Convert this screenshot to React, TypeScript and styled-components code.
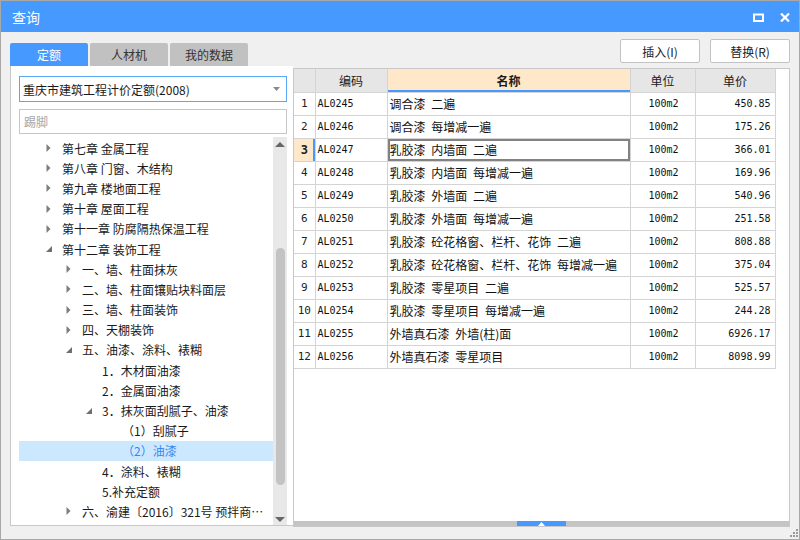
import React from 'react';
import styled, { createGlobalStyle, css } from 'styled-components';

const GlobalStyle = createGlobalStyle`
  html, body { margin: 0; padding: 0; }
  body {
    width: 800px;
    height: 540px;
    overflow: hidden;
    font-family: "Noto Sans CJK SC", "Liberation Sans", sans-serif;
    color: #1a1a1a;
  }
  * { box-sizing: border-box; }
`;

const colors = {
  blue: '#4599ff',
  border: '#c8c8c8',
  grid: '#d4d4d4',
  peach: '#ffe8c9',
  selected: '#cce8ff',
  body: '#f0f0f0',
};

const monoFont = `"DejaVu Sans Mono", "Liberation Mono", monospace`;

interface TreeItem {
  label: string;
  level: number;
  arrow?: 'closed' | 'open';
  selected?: boolean;
}

const treeItems: TreeItem[] = [
  { label: '第七章 金属工程', level: 0, arrow: 'closed' },
  { label: '第八章 门窗、木结构', level: 0, arrow: 'closed' },
  { label: '第九章 楼地面工程', level: 0, arrow: 'closed' },
  { label: '第十章 屋面工程', level: 0, arrow: 'closed' },
  { label: '第十一章 防腐隔热保温工程', level: 0, arrow: 'closed' },
  { label: '第十二章 装饰工程', level: 0, arrow: 'open' },
  { label: '一、墙、柱面抹灰', level: 1, arrow: 'closed' },
  { label: '二、墙、柱面镶贴块料面层', level: 1, arrow: 'closed' },
  { label: '三、墙、柱面装饰', level: 1, arrow: 'closed' },
  { label: '四、天棚装饰', level: 1, arrow: 'closed' },
  { label: '五、油漆、涂料、裱糊', level: 1, arrow: 'open' },
  { label: '1．木材面油漆', level: 2 },
  { label: '2．金属面油漆', level: 2 },
  { label: '3．抹灰面刮腻子、油漆', level: 2, arrow: 'open' },
  { label: '（1）刮腻子', level: 3 },
  { label: '（2）油漆', level: 3, selected: true },
  { label: '4．涂料、裱糊', level: 2 },
  { label: '5.补充定额', level: 2 },
  { label: '六、渝建〔2016〕321号 预拌商品砂浆', level: 1, arrow: 'closed' },
  { label: '第十三章 其他工程', level: 0, arrow: 'closed' },
];

interface Quota {
  code: string;
  name: string;
  unit: string;
  price: string;
}

const quotas: Quota[] = [
  { code: 'AL0245', name: '调合漆 二遍', unit: '100m2', price: '450.85' },
  { code: 'AL0246', name: '调合漆 每增减一遍', unit: '100m2', price: '175.26' },
  { code: 'AL0247', name: '乳胶漆 内墙面 二遍', unit: '100m2', price: '366.01' },
  { code: 'AL0248', name: '乳胶漆 内墙面 每增减一遍', unit: '100m2', price: '169.96' },
  { code: 'AL0249', name: '乳胶漆 外墙面 二遍', unit: '100m2', price: '540.96' },
  { code: 'AL0250', name: '乳胶漆 外墙面 每增减一遍', unit: '100m2', price: '251.58' },
  { code: 'AL0251', name: '乳胶漆 砼花格窗、栏杆、花饰 二遍', unit: '100m2', price: '808.88' },
  { code: 'AL0252', name: '乳胶漆 砼花格窗、栏杆、花饰 每增减一遍', unit: '100m2', price: '375.04' },
  { code: 'AL0253', name: '乳胶漆 零星项目 二遍', unit: '100m2', price: '525.57' },
  { code: 'AL0254', name: '乳胶漆 零星项目 每增减一遍', unit: '100m2', price: '244.28' },
  { code: 'AL0255', name: '外墙真石漆 外墙(柱)面', unit: '100m2', price: '6926.17' },
  { code: 'AL0256', name: '外墙真石漆 零星项目', unit: '100m2', price: '8098.99' },
];

const tabs = ['定额', '人材机', '我的数据'];

const App: React.FC = () => {
  const activeRow = 2;
  return (
    <>
      <GlobalStyle />
      <Window>
        <TitleBar>
          <Title>查询</Title>
          <TitleControls>
            <svg width="11" height="9" viewBox="0 0 11 9">
              <rect x="1" y="1.5" width="9" height="6.5" fill="none" stroke="#fff" strokeWidth="2" />
            </svg>
            <svg width="10" height="9" viewBox="0 0 10 9">
              <path d="M1 0.5 L9 8.5 M9 0.5 L1 8.5" stroke="#fff" strokeWidth="2.2" />
            </svg>
          </TitleControls>
        </TitleBar>
        <Body>
          <TopRow>
            <Tabs>
              {tabs.map((t, i) => (
                <Tab key={t} $active={i === 0}>
                  {t}
                </Tab>
              ))}
            </Tabs>
            <Actions>
              <ActionButton>插入(I)</ActionButton>
              <ActionButton>替换(R)</ActionButton>
            </Actions>
          </TopRow>
          <Content>
            <LeftPanel>
              <Select>
                <span>重庆市建筑工程计价定额(2008)</span>
                <svg width="7" height="4" viewBox="0 0 7 4">
                  <path d="M0 0 H7 L3.5 4 Z" fill="#8a8a8a" />
                </svg>
              </Select>
              <SearchInput placeholder="踢脚" />
              <TreeArea>
                <TreeList>
                  {treeItems.map((item) => (
                    <TreeRow key={item.label} $level={item.level} $selected={item.selected}>
                      <ArrowSlot>
                        {item.arrow === 'closed' && (
                          <svg width="8" height="8" viewBox="0 0 8 8">
                            <path d="M0.5 0 L4.5 4 L0.5 8 Z" fill="#7d7d7d" />
                          </svg>
                        )}
                        {item.arrow === 'open' && (
                          <svg width="8" height="8" viewBox="0 0 8 8">
                            <path d="M6 1 L6 7 L0 7 Z" fill="#6f6f6f" />
                          </svg>
                        )}
                      </ArrowSlot>
                      <TreeLabel>{item.label}</TreeLabel>
                    </TreeRow>
                  ))}
                </TreeList>
                <VScroll>
                  <svg width="10" height="6" viewBox="0 0 10 6">
                    <path d="M0 5 L5 0 L10 5 Z" fill="#666" />
                  </svg>
                  <VThumb $offset={100} $size={237} />
                  <svg width="10" height="6" viewBox="0 0 10 6">
                    <path d="M0 0 H10 L5 5 Z" fill="#666" />
                  </svg>
                </VScroll>
              </TreeArea>
            </LeftPanel>
            <RightPanel>
              <GridArea>
                <Grid>
                  <colgroup>
                    <col style={{ width: 21 }} />
                    <col style={{ width: 72 }} />
                    <col style={{ width: 243 }} />
                    <col style={{ width: 65 }} />
                    <col style={{ width: 80 }} />
                  </colgroup>
                  <thead>
                    <tr>
                      <HeadCell />
                      <HeadCell>编码</HeadCell>
                      <HeadCell $active>名称</HeadCell>
                      <HeadCell>单位</HeadCell>
                      <HeadCell>单价</HeadCell>
                    </tr>
                  </thead>
                  <tbody>
                    {quotas.map((q, i) => (
                      <tr key={q.code}>
                        <RowNum $active={i === activeRow}>{i + 1}</RowNum>
                        <MonoCell>{q.code}</MonoCell>
                        <NameCell $focused={i === activeRow}>{q.name}</NameCell>
                        <MonoCell $align="center">{q.unit}</MonoCell>
                        <MonoCell $align="right">{q.price}</MonoCell>
                      </tr>
                    ))}
                  </tbody>
                </Grid>
              </GridArea>
              <HScroll>
                <HThumb $offset={223}>
                  <svg width="7" height="4" viewBox="0 0 7 4">
                    <path d="M0 4 L3.5 0 L7 4 Z" fill="#fff" />
                  </svg>
                </HThumb>
              </HScroll>
            </RightPanel>
          </Content>
        </Body>
        <Grip>
          <svg width="8" height="8" viewBox="0 0 8 8">
            <rect x="6" y="0" width="2" height="2" fill="#9a9a9a" />
            <rect x="3" y="3" width="2" height="2" fill="#9a9a9a" />
            <rect x="6" y="3" width="2" height="2" fill="#9a9a9a" />
            <rect x="0" y="6" width="2" height="2" fill="#9a9a9a" />
            <rect x="3" y="6" width="2" height="2" fill="#9a9a9a" />
            <rect x="6" y="6" width="2" height="2" fill="#9a9a9a" />
          </svg>
        </Grip>
      </Window>
    </>
  );
};

const Window = styled.div`
  position: relative;
  width: 800px;
  height: 540px;
  border: 1px solid #a8a8a8;
  background: ${colors.body};
  display: flex;
  flex-direction: column;
`;

const TitleBar = styled.div`
  height: 31px;
  flex-shrink: 0;
  background: ${colors.blue};
  display: flex;
  align-items: center;
  justify-content: space-between;
  padding: 1px 9px 0 11px;
`;

const Title = styled.span`
  color: #fff;
  font-size: 14px;
  line-height: 20px;
`;

const TitleControls = styled.div`
  display: flex;
  align-items: center;
  gap: 16px;
  svg {
    display: block;
  }
`;

const Body = styled.div`
  flex: 1;
  display: flex;
  flex-direction: column;
  padding: 0 9px;
`;

const TopRow = styled.div`
  height: 34px;
  display: flex;
  justify-content: space-between;
  align-items: flex-end;
`;

const Tabs = styled.div`
  display: flex;
  gap: 2px;
`;

const Tab = styled.div<{ $active?: boolean }>`
  width: 78px;
  height: 23px;
  display: flex;
  align-items: center;
  justify-content: center;
  font-size: 12px;
  border-radius: 2px 2px 0 0;
  background: ${(p) => (p.$active ? colors.blue : '#c1c1c1')};
  color: ${(p) => (p.$active ? '#fff' : '#333')};
`;

const Actions = styled.div`
  align-self: flex-start;
  margin-top: 7px;
  display: flex;
  gap: 10px;
`;

const ActionButton = styled.button`
  width: 80px;
  height: 24px;
  padding: 0;
  background: #fff;
  border: 1px solid #c3c3c3;
  border-radius: 2px;
  font-family: "Noto Sans CJK SC", "Liberation Sans", sans-serif;
  font-size: 12px;
  color: #222;
`;

const Content = styled.div`
  height: 461px;
  display: flex;
  align-items: flex-start;
`;

const LeftPanel = styled.div`
  width: 283px;
  height: 460px;
  background: #fff;
  border-left: 1px solid ${colors.border};
  border-bottom: 1px solid ${colors.border};
  padding: 10px 6px 0 8px;
  display: flex;
  flex-direction: column;
`;

const Select = styled.div`
  height: 26px;
  border: 1px solid #5aa6f7;
  display: flex;
  align-items: center;
  justify-content: space-between;
  padding: 0 6px 0 3px;
  font-size: 12px;
  color: #1a1a1a;
`;

const SearchInput = styled.input`
  margin-top: 7px;
  height: 25px;
  border: 1px solid #c6c6c6;
  padding: 0 4px;
  font-family: "Noto Sans CJK SC", "Liberation Sans", sans-serif;
  font-size: 12px;
  outline: none;
  &::placeholder {
    color: #a6a6a6;
  }
`;

const TreeArea = styled.div`
  margin-top: 3px;
  flex: 1;
  min-height: 0;
  display: flex;
  overflow: hidden;
`;

const TreeList = styled.div`
  flex: 1;
  min-width: 0;
  overflow: hidden;
  padding-top: 1px;
`;

const TreeRow = styled.div<{ $level: number; $selected?: boolean }>`
  height: 20.2px;
  display: flex;
  align-items: center;
  padding-left: ${(p) => 24 + p.$level * 20}px;
  padding-right: 8px;
  font-size: 12px;
  white-space: nowrap;
  ${(p) =>
    p.$selected &&
    css`
      background: ${colors.selected};
      color: #3a87f0;
    `}
`;

const ArrowSlot = styled.span`
  width: 19px;
  flex-shrink: 0;
  display: flex;
  align-items: center;
  padding-left: 3px;
  svg {
    display: block;
  }
`;

const TreeLabel = styled.span`
  overflow: hidden;
  text-overflow: ellipsis;
`;

const VScroll = styled.div`
  width: 14px;
  flex-shrink: 0;
  background: #e8e8e8;
  display: flex;
  flex-direction: column;
  align-items: center;
  padding: 5px 0 2px;
  svg {
    display: block;
    flex-shrink: 0;
  }
  svg:last-child {
    margin-top: auto;
  }
`;

const VThumb = styled.div<{ $offset: number; $size: number }>`
  width: 9px;
  height: ${(p) => p.$size}px;
  margin-top: ${(p) => p.$offset}px;
  border-radius: 5px;
  background: #c3c3c3;
`;

const RightPanel = styled.div`
  flex: 1;
  height: 459px;
  margin-top: 2px;
  background: #fff;
  border: 1px solid ${colors.border};
  display: flex;
  flex-direction: column;
`;

const GridArea = styled.div`
  flex: 1;
  min-height: 0;
  overflow: hidden;
`;

const Grid = styled.table`
  border-collapse: collapse;
  table-layout: fixed;
  width: 481px;
  tr {
    height: 23px;
  }
  td,
  th {
    border: 1px solid ${colors.grid};
    padding: 0;
    white-space: nowrap;
    overflow: hidden;
  }
  tr > :first-child {
    border-left: none;
  }
  thead th {
    border-top: none;
  }
`;

const HeadCell = styled.th<{ $active?: boolean }>`
  font-size: 12px;
  font-weight: ${(p) => (p.$active ? 700 : 400)};
  color: #1a1a1a;
  text-align: center;
  background: ${(p) => (p.$active ? colors.peach : '#e6e6e6')};
  box-shadow: ${(p) => (p.$active ? `inset 0 -2px 0 ${colors.blue}` : 'none')};
`;

const RowNum = styled.td<{ $active?: boolean }>`
  font-family: ${monoFont};
  font-size: 11px;
  text-align: center;
  color: #222;
  ${(p) =>
    p.$active &&
    css`
      background: ${colors.peach};
      font-weight: 700;
      font-size: 12px;
      box-shadow: inset -2px 0 0 ${colors.blue};
    `}
`;

const MonoCell = styled.td<{ $align?: 'left' | 'center' | 'right' }>`
  font-family: ${monoFont};
  font-size: 10px;
  color: #111;
  text-align: ${(p) => p.$align ?? 'left'};
  padding: ${(p) => (p.$align === 'right' ? '0 4px 0 0' : '0 0 0 2px')} !important;
`;

const NameCell = styled.td<{ $focused?: boolean }>`
  font-size: 12px;
  color: #111;
  word-spacing: 3px;
  padding: 0 0 0 2px !important;
  box-shadow: ${(p) => (p.$focused ? 'inset 0 0 0 2px #828282' : 'none')};
`;

const HScroll = styled.div`
  height: 5px;
  flex-shrink: 0;
  background: #c4c4c4;
  display: flex;
`;

const HThumb = styled.div<{ $offset: number }>`
  width: 49px;
  margin-left: ${(p) => p.$offset}px;
  background: ${colors.blue};
  display: flex;
  align-items: center;
  justify-content: center;
  svg {
    display: block;
  }
`;

const Grip = styled.div`
  position: absolute;
  right: 1px;
  bottom: 2px;
  svg {
    display: block;
  }
`;

export default App;
